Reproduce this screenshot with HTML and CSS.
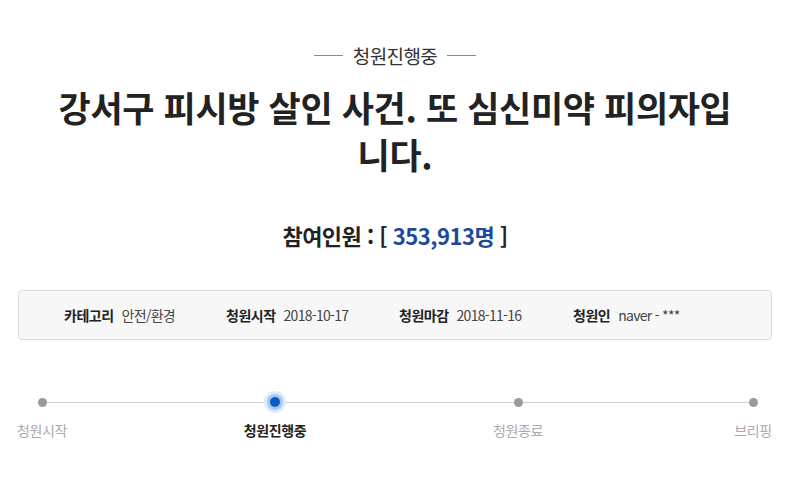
FILE: index.html
```html
<!DOCTYPE html>
<html lang="ko">
<head>
<meta charset="utf-8">
<link rel="stylesheet" href="styles.css">
</head>
<body>
<div class="page">
  <div class="status"><span class="dash"></span><span class="status-text">청원진행중</span><span class="dash"></span></div>
  <h1 class="title">강서구 피시방 살인 사건. 또 심신미약 피의자입니다.</h1>
  <div class="count">참여인원 : [ <span class="num">353,913명</span> ]</div>
  <div class="info">
    <div class="item"><span class="key">카테고리</span><span class="val">안전/환경</span></div>
    <div class="item"><span class="key">청원시작</span><span class="val">2018-10-17</span></div>
    <div class="item"><span class="key">청원마감</span><span class="val">2018-11-16</span></div>
    <div class="item"><span class="key">청원인</span><span class="val">naver - ***</span></div>
  </div>
  <div class="steps">
    <div class="track"></div>
    <div class="step s1"><span class="dot"></span><span class="label">청원시작</span></div>
    <div class="step s2 active"><span class="dot"></span><span class="label">청원진행중</span></div>
    <div class="step s3"><span class="dot"></span><span class="label">청원종료</span></div>
    <div class="step s4"><span class="dot"></span><span class="label">브리핑</span></div>
  </div>
</div>
</body>
</html>
```
FILE: styles.css
```css
html, body { margin: 0; padding: 0; background: #fff; }
body { font-family: "Noto Sans CJK KR", "Noto Sans", sans-serif; color: #333; }
.page { width: 754px; margin: 0 0 0 18px; padding-top: 40px; }
.status { display: flex; justify-content: center; align-items: center; gap: 10px; height: 30px; }
.status-text { font-size: 19px; color: #333; letter-spacing: -0.6px; }
.dash { width: 29px; height: 1px; background: #888; }
.title { margin: 13px auto 0; width: 690px; text-align: center; font-size: 35px; line-height: 47px; font-weight: 700; color: #222; letter-spacing: -0.35px; }
.count { margin-top: 42px; text-align: center; font-size: 22px; font-weight: 700; color: #222; letter-spacing: -0.5px; line-height: 32px; }
.num { color: #1b4a9c; }
.info { margin-top: 39px; height: 50px; box-sizing: border-box; border: 1px solid #dcdcdc; border-radius: 4px; background: #f7f7f7; display: flex; align-items: center; padding-left: 45px; font-size: 14px; }
.item { display: flex; align-items: center; gap: 8px; }
.item:nth-child(1) { width: 162px; }
.item:nth-child(2) { width: 173px; }
.item:nth-child(3) { width: 174px; }
.key { font-weight: 700; color: #222; letter-spacing: -0.5px; }
.val { color: #444; letter-spacing: -0.7px; }
.steps { position: relative; margin-top: 54px; display: flex; justify-content: space-between; }
.track { position: absolute; left: 24px; right: 19px; top: 8px; height: 1px; background: #cfcfcf; }
.step { display: flex; flex-direction: column; align-items: center; position: relative; }
.s1 { width: 48px; }
.s2 { width: 54px; }
.s3 { width: 68px; }
.s4 { width: 38px; }
.dot { width: 9px; height: 9px; border-radius: 50%; background: #999; margin-top: 4px; }
.active .dot { background: #0a5bc4; width: 10px; height: 10px; margin-top: 3px; box-shadow: 0 0 0 3px #a9c8f0, 0 0 0 6px #e0ebfa; }
.label { margin-top: 13px; font-size: 14px; color: #aaa; white-space: nowrap; letter-spacing: -0.4px; line-height: 20px; }
.active .label { color: #222; font-weight: 700; }
```
